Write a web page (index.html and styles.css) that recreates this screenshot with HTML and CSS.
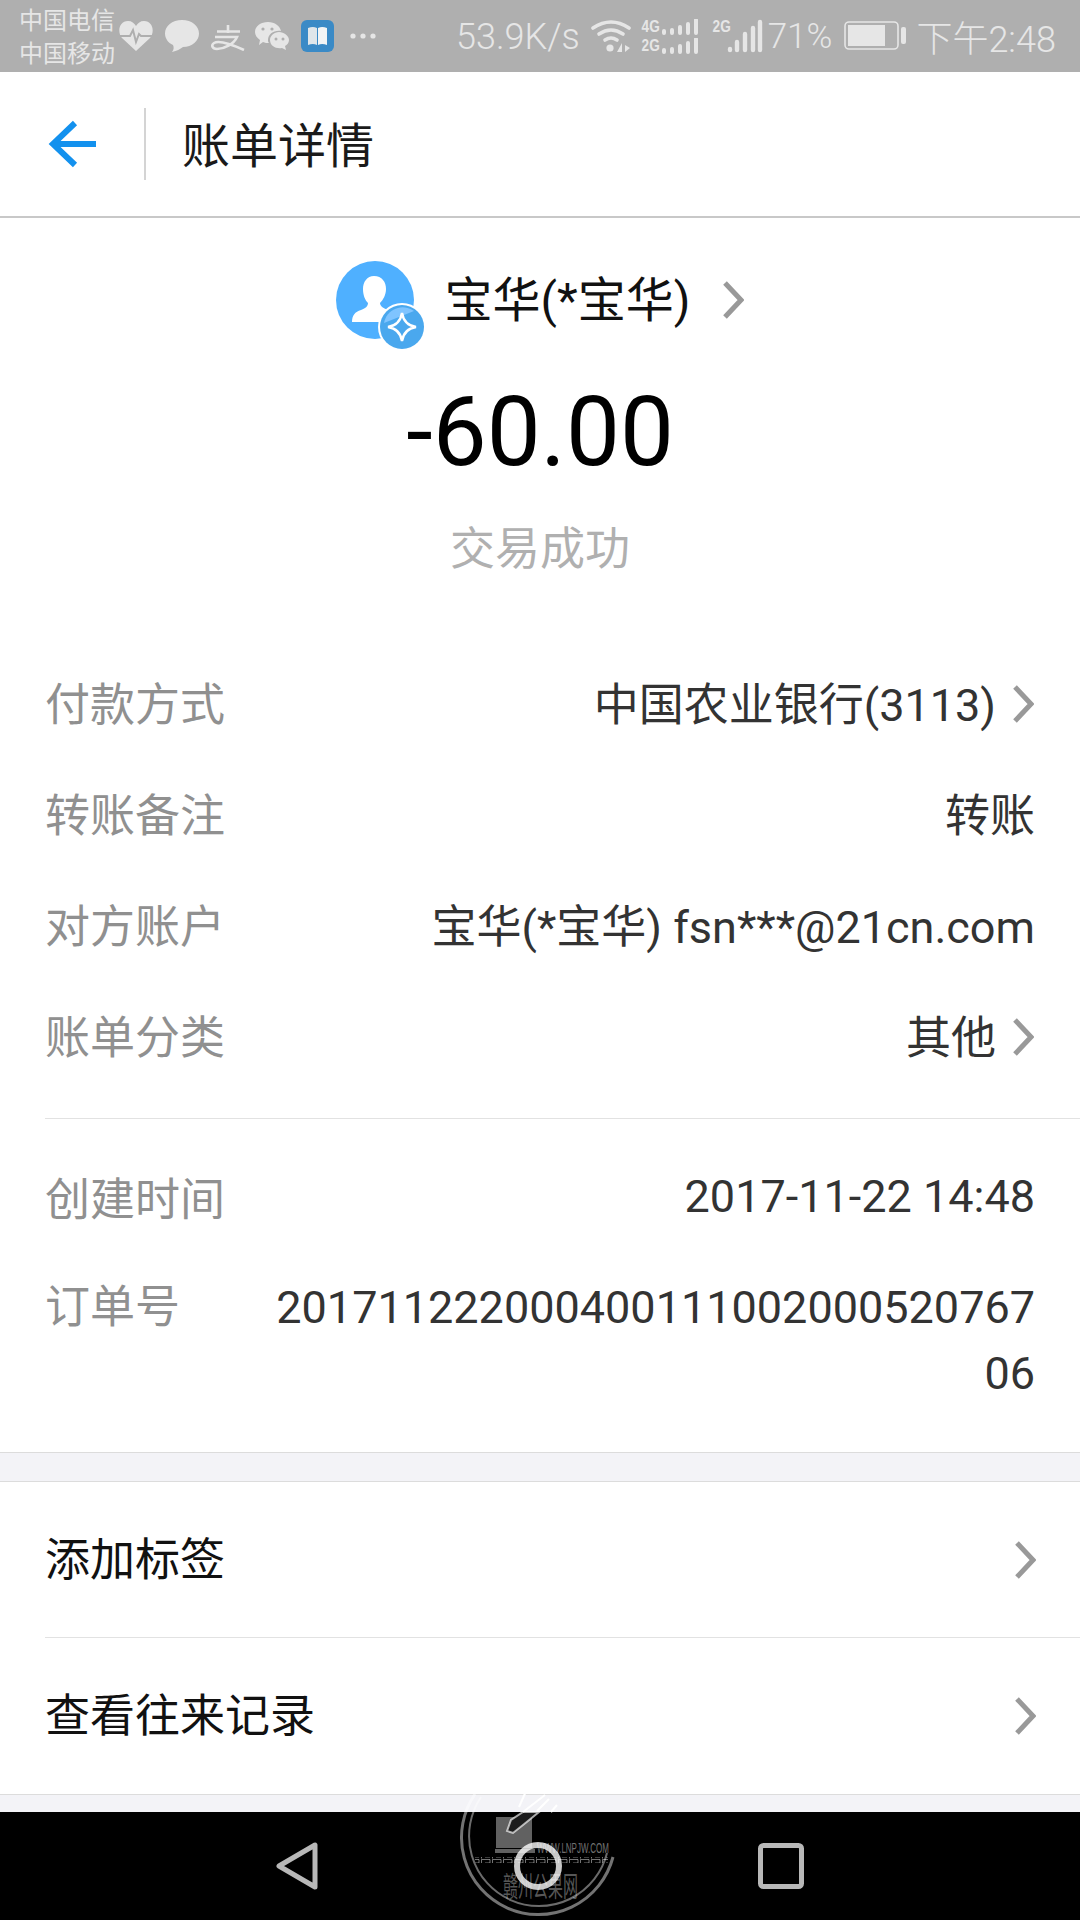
FILE: index.html
```html
<!DOCTYPE html>
<html lang="zh-CN">
    <head>
        <meta charset="UTF-8" />
        <meta name="viewport" content="width=device-width, initial-scale=1" />
        <title>账单详情</title>
        <link rel="stylesheet" href="styles.css">
    </head>
    <body>

        <div class="status-bar">
            <div class="carrier">
                <span>中国电信</span>
                <span>中国移动</span>
            </div>
            <svg class="notify heart" width="34" height="32" viewBox="0 0 34 32">
                <path d="M17 31 L3 18 C-2 12 0 1 9 1 C13 1 15 3 17 6 C19 3 21 1 25 1 C34 1 36 12 31 18 Z" fill="#e6e6e6"/>
                <path d="M1 16 H11 L14 10 L17 22 L20 14 L22 16 H33" fill="none" stroke="#afafaf" stroke-width="2"/>
            </svg>
            <svg class="notify bubble" width="34" height="32" viewBox="0 0 34 32">
                <path d="M17 0 C27 0 34 6 34 13.5 C34 21 27 27 18 27 C15 29 12 31 7 32 C9 30 9 27 8 25 C3 23 0 18 0 13.5 C0 6 7 0 17 0 Z" fill="#e6e6e6"/>
            </svg>
            <svg class="notify alipay" width="34" height="26" viewBox="0 0 34 26">
                <path d="M17 0 V8 M6 6.5 H29 M4 12 H26 C23 19 13 24 6 24 C1 24 0 20 3 18 C8 15 22 20 33 25" fill="none" stroke="#e6e6e6" stroke-width="2.6"/>
            </svg>
            <svg class="notify wechat" width="34" height="30" viewBox="0 0 34 30">
                <path d="M13 1 C20 1 25 5 26 10 C19 9 13 13 13 19 C13 20 13 21 14 22 C12 22 10 22 8 21 L4 24 L5 19 C2 17 0 14 0 11 C0 5 6 1 13 1 Z" fill="#e6e6e6"/>
                <path d="M24 11 C29 11 34 15 34 19 C34 22 32 24 30 25 L31 29 L27 27 C21 28 15 25 15 19 C15 15 19 11 24 11 Z" fill="#e6e6e6"/>
                <circle cx="8" cy="8" r="1.6" fill="#afafaf"/>
                <circle cx="17" cy="8" r="1.6" fill="#afafaf"/>
                <circle cx="21" cy="18" r="1.5" fill="#afafaf"/>
                <circle cx="28" cy="18" r="1.5" fill="#afafaf"/>
            </svg>
            <svg class="notify book" width="33" height="32" viewBox="0 0 33 32">
                <rect width="33" height="32" rx="6" fill="#3a8ac6"/>
                <path d="M7 8 Q12 6 16 8 V25 Q12 23 7 25 Z" fill="#dfe6ea"/>
                <path d="M17 8 Q21 6 26 8 V25 Q21 23 17 25 Z" fill="#f2f4f5"/>
            </svg>
            <svg class="notify dots" width="26" height="6" viewBox="0 0 26 6">
                <circle cx="3" cy="3" r="2.6" fill="#e6e6e6"/>
                <circle cx="13" cy="3" r="2.6" fill="#e6e6e6"/>
                <circle cx="23" cy="3" r="2.6" fill="#e6e6e6"/>
            </svg>
            <span class="speed">53.9K/s</span>
            <svg class="wifi" width="40" height="34" viewBox="0 0 40 34">
                <path d="M2 9 Q20 -3 38 9" fill="none" stroke="#e6e6e6" stroke-width="3.6" stroke-linecap="round"/>
                <path d="M8 15 Q20 7 32 15" fill="none" stroke="#e6e6e6" stroke-width="3.6" stroke-linecap="round"/>
                <path d="M14 21 Q20 17 26 21" fill="none" stroke="#e6e6e6" stroke-width="3.6" stroke-linecap="round"/>
                <circle cx="19" cy="29" r="3.6" fill="#e6e6e6"/>
                <path d="M31 24 V33 H26 Z M34 33 V26 L39 29 Z" fill="#e6e6e6"/>
            </svg>
            <div class="sim-signal">
                <div class="sim-line">
                    <span class="sim-tag">4G</span>
                    <svg width="38" height="16" viewBox="0 0 38 16"><path d="M2 12 V14 M10 11 V14 M18 8 V14 M26 5 V14 M34 1 V14" stroke="#e6e6e6" stroke-width="4" stroke-linecap="round"/></svg>
                </div>
                <div class="sim-line">
                    <span class="sim-tag">2G</span>
                    <svg width="38" height="16" viewBox="0 0 38 16"><path d="M2 12 V14 M10 11 V14 M18 8 V14 M26 5 V14 M34 1 V14" stroke="#e6e6e6" stroke-width="4" stroke-linecap="round"/></svg>
                </div>
            </div>
            <div class="sim-two">
                <span class="sim-tag">2G</span>
                <svg width="36" height="34" viewBox="0 0 36 34"><path d="M3 30 V31 M10 23 V31 M18 15 V31 M26 9 V31 M33 3 V31" stroke="#e6e6e6" stroke-width="4.4" stroke-linecap="round"/></svg>
            </div>
            <span class="battery-text">71%</span>
            <svg class="battery" width="62" height="30" viewBox="0 0 62 30">
                <rect x="1" y="1" width="53" height="27" rx="4" fill="none" stroke="#e6e6e6" stroke-width="1.6"/>
                <rect x="4" y="4" width="37" height="21" fill="#e6e6e6"/>
                <rect x="57" y="6" width="5" height="17" rx="2" fill="#e6e6e6"/>
            </svg>
            <span class="clock">下午2:48</span>
        </div>

        <header class="title-bar">
            <svg class="back" width="48" height="48" viewBox="0 0 48 48">
                <path d="M27 3 L5 24 L27 45 M5 24 H48" fill="none" stroke="#1391ee" stroke-width="6"/>
            </svg>
            <div class="title-line"></div>
            <h1>账单详情</h1>
        </header>

        <main>
            <section class="bill">
                <div class="payee">
                    <div class="avatar">
                        <svg width="78" height="78" viewBox="0 0 78 78">
                            <circle cx="39" cy="39" r="39" fill="#4fb0ff"/>
                            <path d="M38 15 C46 15 50 21 50 28 C50 34 47 39 44 42 C44 45 47 47 52 49 C58 51 60 54 60 61 H16 C16 54 19 51 25 49 C30 47 32 45 32 42 C29 39 27 34 27 28 C27 21 31 15 38 15 Z" fill="#fff"/>
                        </svg>
                        <svg class="badge" width="48" height="48" viewBox="0 0 48 48">
                            <circle cx="24" cy="24" r="24" fill="#fff"/>
                            <circle cx="24" cy="24" r="22" fill="#4aa8ee"/>
                            <path d="M6 20 A19 19 0 0 1 36 8 Z" fill="#7fc4ff"/>
                            <path d="M24 10 Q26 22 38 24 Q26 26 24 38 Q22 26 10 24 Q22 22 24 10 Z" fill="none" stroke="#fff" stroke-width="2.4"/>
                        </svg>
                    </div>
                    <span class="payee-name">宝华(*宝华)</span>
                    <svg class="arrow" width="22" height="38" viewBox="0 0 22 38">
                        <path d="M3 2 L19 19 L3 36" fill="none" stroke="#999" stroke-width="5"/>
                    </svg>
                </div>
                <div class="amount">-60.00</div>
                <div class="result">交易成功</div>

                <div class="fields">
                    <div class="field">
                        <span class="field-label">付款方式</span>
                        <span class="field-value">中国农业银行(3113)</span>
                        <svg class="arrow" width="22" height="38" viewBox="0 0 22 38"><path d="M3 2 L19 19 L3 36" fill="none" stroke="#999" stroke-width="5"/></svg>
                    </div>
                    <div class="field">
                        <span class="field-label">转账备注</span>
                        <span class="field-value">转账</span>
                    </div>
                    <div class="field">
                        <span class="field-label">对方账户</span>
                        <span class="field-value">宝华(*宝华) fsn***@21cn.com</span>
                    </div>
                    <div class="field">
                        <span class="field-label">账单分类</span>
                        <span class="field-value">其他</span>
                        <svg class="arrow" width="22" height="38" viewBox="0 0 22 38"><path d="M3 2 L19 19 L3 36" fill="none" stroke="#999" stroke-width="5"/></svg>
                    </div>
                </div>

                <div class="fields fields-second">
                    <div class="field">
                        <span class="field-label">创建时间</span>
                        <span class="field-value">2017-11-22 14:48</span>
                    </div>
                    <div class="field field-long">
                        <span class="field-label">订单号</span>
                        <span class="field-value order-no">20171122200040011100200052076706</span>
                    </div>
                </div>
            </section>

            <section class="actions">
                <div class="action">
                    <span>添加标签</span>
                    <svg class="arrow" width="22" height="38" viewBox="0 0 22 38"><path d="M3 2 L19 19 L3 36" fill="none" stroke="#999" stroke-width="5"/></svg>
                </div>
                <div class="action">
                    <span>查看往来记录</span>
                    <svg class="arrow" width="22" height="38" viewBox="0 0 22 38"><path d="M3 2 L19 19 L3 36" fill="none" stroke="#999" stroke-width="5"/></svg>
                </div>
            </section>
        </main>

        <nav class="nav-bar">
            <svg width="42" height="48" viewBox="0 0 42 48">
                <path d="M39 3 V45 L3 24 Z" fill="none" stroke="#b8b8b8" stroke-width="5" stroke-linejoin="round"/>
            </svg>
            <svg width="48" height="48" viewBox="0 0 48 48">
                <circle cx="24" cy="24" r="21" fill="none" stroke="#c8c8c8" stroke-width="6"/>
            </svg>
            <svg width="46" height="46" viewBox="0 0 46 46">
                <rect x="2.5" y="2.5" width="41" height="41" rx="3" fill="none" stroke="#b8b8b8" stroke-width="5"/>
            </svg>
        </nav>

        <!-- site stamp sitting over the bottom of the page -->
        <svg class="stamp" width="160" height="160" viewBox="0 0 160 160">
            <defs>
                <pattern id="key-band" width="11" height="6" patternUnits="userSpaceOnUse">
                    <path d="M0.5 5.5 V0.5 H9 V4 H4" fill="none" stroke="#fff" stroke-opacity="0.45" stroke-width="1"/>
                </pattern>
            </defs>
            <path d="M16 37 A77 77 0 1 0 154 100" fill="none" stroke="#fff" stroke-opacity="0.45" stroke-width="3"/>
            <path d="M22 40 A70 70 0 1 0 148 96" fill="none" stroke="#fff" stroke-opacity="0.42" stroke-width="2"/>
            <rect x="37" y="60" width="36" height="31" fill="#fff" fill-opacity="0.38"/>
            <rect x="36" y="92" width="40" height="4" fill="#fff" fill-opacity="0.38"/>
            <path d="M48 74 L52 63 L64 55 H80 L64 68 L54 76 Z" fill="#1c1c1c" stroke="#fff" stroke-opacity="0.65" stroke-width="2"/>
            <path d="M64 55 L86 38 M78 54 L90 42 M60 50 L68 32 M92 55 L98 48" fill="none" stroke="#fff" stroke-width="2"/>
            <text class="stamp-url" transform="translate(78 96) scale(1 1.9)">WWW.LNPJW.COM</text>
            <rect x="16" y="100" width="133" height="6" fill="url(#key-band)"/>
            <text class="stamp-name" transform="translate(44 140) scale(1 1.9)">赣州公果网</text>
        </svg>

    </body>
</html>
```

FILE: styles.css
```css
* {
  box-sizing: border-box;
}
html, body {
  margin: 0;
  height: 100%;
}
body {
  width: 1080px;
  height: 1920px;
  position: relative;
  overflow: hidden;
  display: flex;
  flex-direction: column;
  font-family: Roboto, "Noto Sans CJK SC", sans-serif;
  background: #fff;
  color: #333;
}

/* Status bar */
.status-bar {
  height: 72px;
  background: #afafaf;
  color: #e6e6e6;
  display: flex;
  align-items: center;
  padding-left: 19px;
  flex-shrink: 0;
}
.carrier {
  display: flex;
  flex-direction: column;
  font-size: 24px;
  line-height: 33px;
  width: 100px;
  padding-top: 4px;
}
.notify {
  flex-shrink: 0;
}
.bubble {
  margin-left: 12px;
}
.alipay {
  margin-left: 12px;
  margin-top: 4px;
}
.wechat {
  margin-left: 10px;
}
.book {
  margin-left: 12px;
}
.dots {
  margin-left: 16px;
}
.speed {
  margin-left: 80px;
  width: 131px;
  font-size: 36px;
  padding-top: 2px;
  font-weight: 300;
  white-space: nowrap;
}
.wifi {
  margin-left: 4px;
}
.sim-signal {
  margin-left: 9px;
  display: flex;
  flex-direction: column;
  gap: 3px;
}
.sim-line {
  display: flex;
  align-items: flex-end;
  gap: 1px;
}
.sim-tag {
  display: inline-block;
  font-family: "Liberation Sans", Roboto, sans-serif;
  font-size: 16px;
  line-height: 16px;
  font-weight: 700;
  transform: scaleX(0.85);
}
.sim-two {
  margin-left: 11px;
  display: flex;
  align-items: flex-start;
}
.sim-two svg {
  margin-left: -6px;
}
.battery-text {
  margin-left: 5px;
  font-size: 35px;
  font-weight: 300;
}
.battery {
  margin-left: 12px;
}
.clock {
  margin-left: 10px;
  font-size: 36px;
  font-weight: 300;
  white-space: nowrap;
}

/* Title bar */
.title-bar {
  height: 146px;
  border-bottom: 2px solid #c8c8c8;
  display: flex;
  align-items: center;
  padding-left: 48px;
  flex-shrink: 0;
}
.title-line {
  width: 2px;
  height: 72px;
  background: #d4d4d4;
  margin-left: 48px;
}
h1 {
  margin: 0 0 4px 36px;
  font-size: 48px;
  font-weight: 400;
  color: #1a1a1a;
}

main {
  flex: 1;
  background: #f3f3f7;
  overflow: hidden;
}

/* Bill summary */
.bill {
  background: #fff;
  border-bottom: 1px solid #dcdcdc;
  padding-top: 43px;
  padding-bottom: 24px;
}
.payee {
  display: flex;
  justify-content: center;
  align-items: center;
}
.avatar {
  position: relative;
  width: 78px;
  height: 78px;
}
.avatar svg {
  display: block;
}
.avatar .badge {
  position: absolute;
  left: 42px;
  top: 42px;
}
.payee-name {
  margin-left: 31px;
  margin-right: 32px;
  margin-bottom: 8px;
  font-size: 48px;
  color: #111;
}
.amount {
  margin-top: 33px;
  font-size: 96px;
  line-height: 120px;
  text-align: center;
  color: #000;
}
.result {
  margin-top: 28px;
  font-size: 45px;
  line-height: 60px;
  text-align: center;
  color: #b0b0b0;
}

/* Rows of the bill */
.fields {
  padding: 66px 45px 28px 45px;
  display: flex;
  flex-direction: column;
}
.fields-second {
  margin-left: 45px;
  padding: 22px 45px 0 0;
  border-top: 1px solid #e2e2e2;
}
.field {
  min-height: 111px;
  display: flex;
  align-items: center;
  font-size: 45px;
}
.field-label {
  color: #909090;
  white-space: nowrap;
  margin-right: auto;
}
.field-value {
  color: #333;
  text-align: right;
}
.field .arrow {
  margin-left: 16px;
  margin-right: 1px;
  margin-top: 4px;
  flex-shrink: 0;
}
.field-long {
  align-items: flex-start;
  padding-top: 23px;
  padding-bottom: 21px;
  line-height: 66px;
}
.order-no {
  width: 770px;
  word-break: break-all;
}

/* Action rows */
.actions {
  margin-top: 28px;
  background: #fff;
  border-top: 1px solid #dcdcdc;
  border-bottom: 1px solid #dcdcdc;
  padding-left: 45px;
}
.action {
  height: 155px;
  padding-right: 44px;
  display: flex;
  justify-content: space-between;
  align-items: center;
  font-size: 45px;
  color: #111;
}
.action span {
  margin-bottom: 7px;
}
.action + .action {
  height: 157px;
  border-top: 1px solid #e2e2e2;
}

/* Navigation bar */
.nav-bar {
  height: 108px;
  background: #000;
  flex-shrink: 0;
  display: flex;
  justify-content: center;
  align-items: center;
  gap: 196px;
}

/* Stamp */
.stamp {
  position: absolute;
  left: 459px;
  top: 1757px;
  pointer-events: none;
}
.stamp-url {
  font-family: "Liberation Sans", sans-serif;
  font-size: 8px;
  fill: #fff;
  fill-opacity: 0.45;
}
.stamp-name {
  font-family: "Noto Sans CJK SC", sans-serif;
  font-size: 15px;
  fill: #fff;
  fill-opacity: 0.35;
}
```
